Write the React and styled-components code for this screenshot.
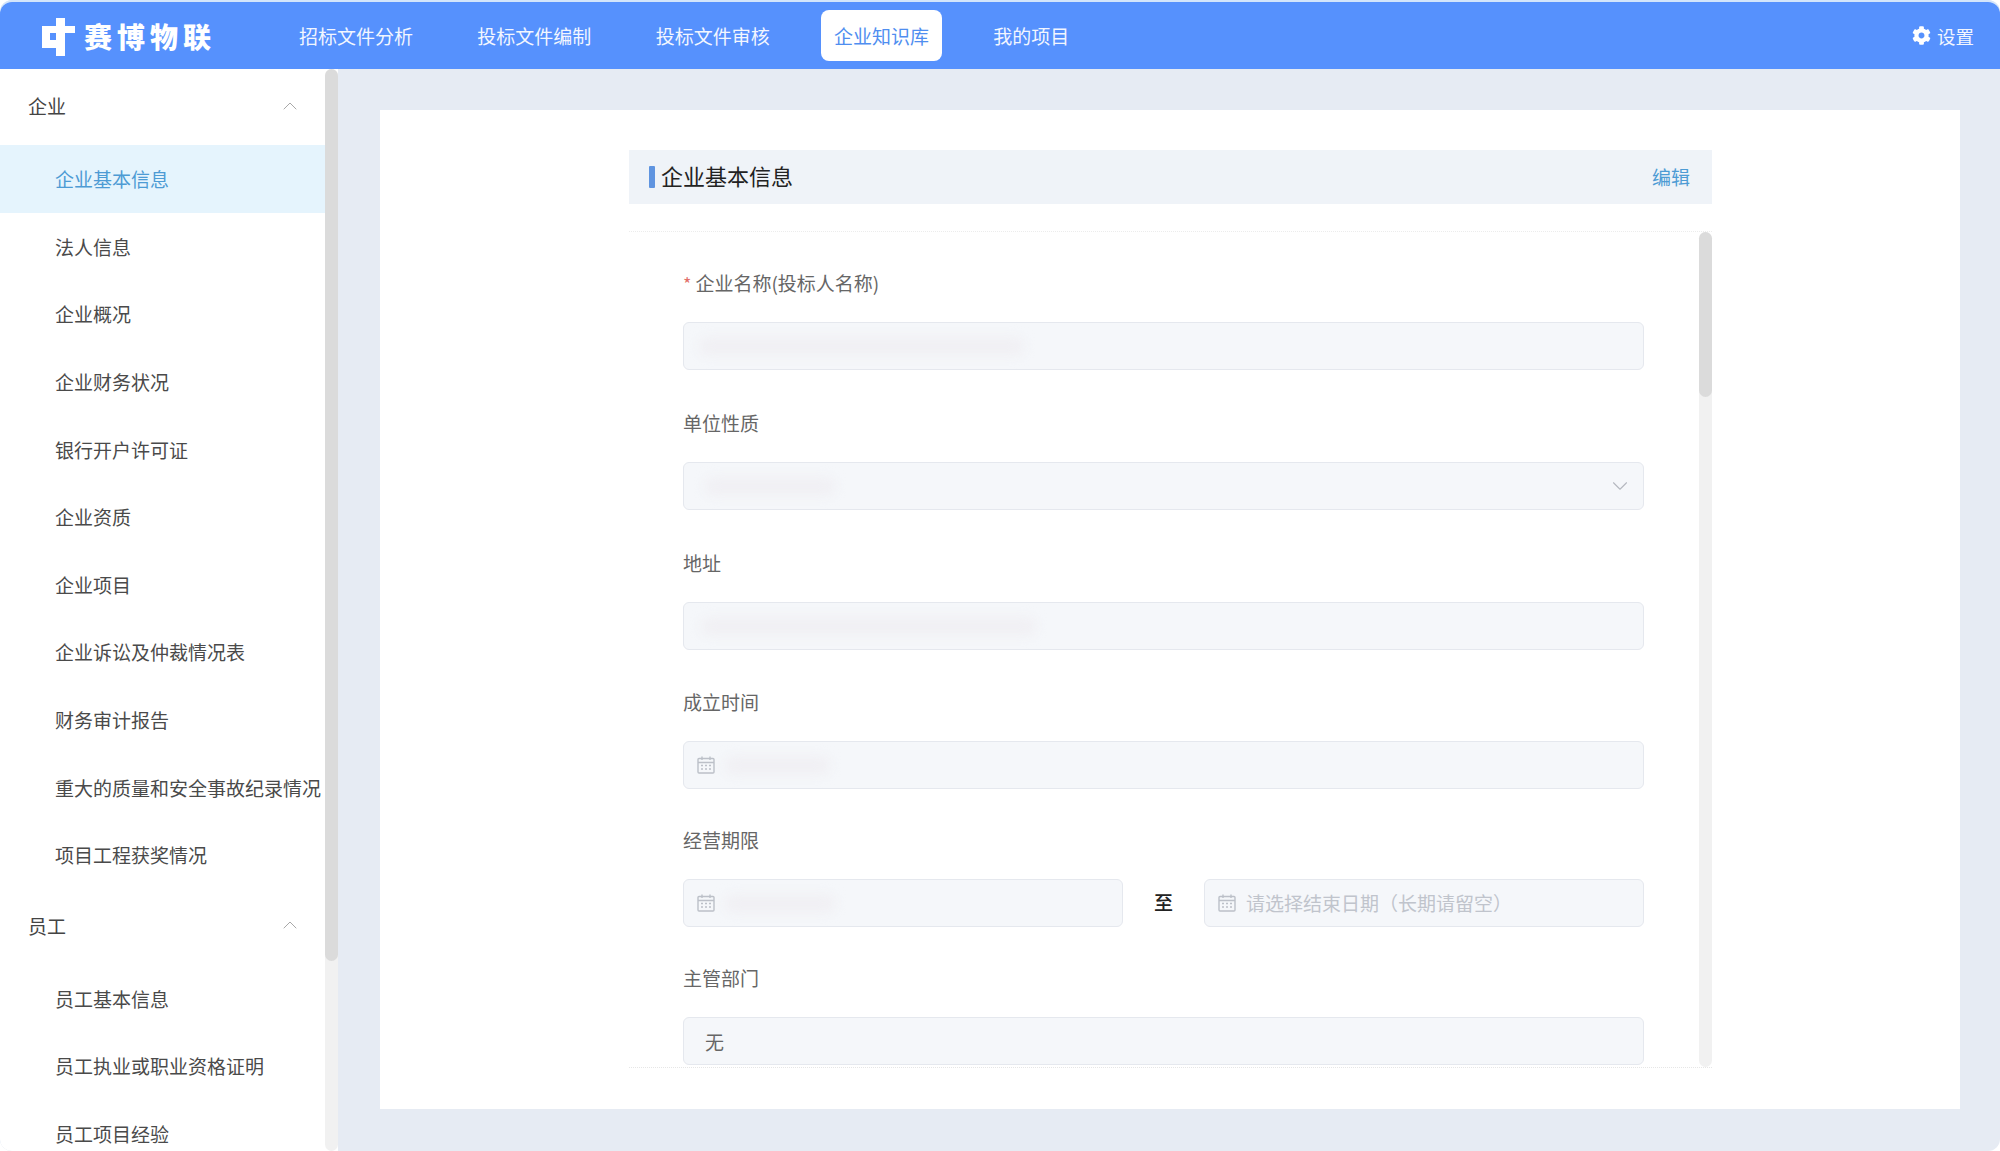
import React from "react";
import styled, { createGlobalStyle } from "styled-components";
import { ChevronUp, ChevronDown } from "lucide-react";
import { FaCog } from "react-icons/fa";

const Global = createGlobalStyle`
  html, body { margin: 0; padding: 0; background: #ffffff; }
  body { font-family: "Noto Sans CJK SC", "Noto Sans", sans-serif; }
  * { box-sizing: border-box; }
`;

const Page = styled.div`
  width: 2000px;
  height: 1151px;
  display: flex;
  flex-direction: column;
  overflow: hidden;
  border-radius: 12px;
  background: #e6ebf3;
  padding-top: 2px;
  box-shadow: inset 0 2px 0 #d3e5fb;
`;

const Header = styled.header`
  height: 67px;
  flex: none;
  display: flex;
  align-items: center;
  background: #5691fd;
  color: #fff;
  padding: 0 26px 0 42px;
  border-radius: 12px 12px 0 0;
`;

const Logo = styled.div`
  width: 244px;
  flex: none;
  display: flex;
  align-items: center;
  gap: 9px;
`;

const LogoName = styled.span`
  font-size: 28px;
  font-weight: 900;
  letter-spacing: 5px;
  line-height: 1;
`;

const Nav = styled.nav`
  display: flex;
  gap: 38.3px;
  flex: 1;
`;

const NavItem = styled.div`
  height: 51px;
  padding: 0 13px;
  display: flex;
  align-items: center;
  font-size: 19px;
  border-radius: 8px;
  color: ${(p) => (p.$active ? "#4f8ef0" : "#f2f6ff")};
  background: ${(p) => (p.$active ? "#fff" : "transparent")};
`;

const Settings = styled.div`
  display: flex;
  align-items: center;
  gap: 6px;
  font-size: 18.5px;
  color: #f2f6ff;
`;

const Body = styled.div`
  flex: 1;
  display: flex;
  min-height: 0;
`;

const Sidebar = styled.aside`
  width: 338px;
  flex: none;
  display: flex;
  background: #fff;
  overflow: hidden;
  border-radius: 0 0 0 12px;
`;

const Menu = styled.div`
  width: 325px;
  flex: none;
`;

const GroupTitle = styled.div`
  height: 76px;
  display: flex;
  align-items: center;
  justify-content: space-between;
  padding: 0 23px 3px 28px;
  font-size: 19px;
  color: #444;
  svg { color: #a8a8a8; }
`;

const MenuItem = styled.div`
  height: 67.6px;
  display: flex;
  align-items: center;
  padding-left: 55px;
  font-size: 19px;
  white-space: nowrap;
  color: ${(p) => (p.$active ? "#4d9bd4" : "#4a4a4a")};
  background: ${(p) => (p.$active ? "#e5f4fd" : "transparent")};
`;

const Track = styled.div`
  width: 13px;
  flex: none;
  background: #f1f1f1;
  border-radius: 7px;
`;

const Thumb = styled.div`
  height: ${(p) => p.$h}px;
  background: #dbdbdb;
  border-radius: 7px;
`;

const Main = styled.main`
  flex: 1;
  min-width: 0;
  padding: 41px 40px 0 42px;
`;

const Card = styled.section`
  height: 999px;
  background: #fff;
  padding: 40px 248px 0 249px;
`;

const SectionHeader = styled.div`
  height: 54px;
  display: flex;
  align-items: center;
  justify-content: space-between;
  padding: 0 22px 0 20px;
  background: #eff3f8;
`;

const Title = styled.h2`
  margin: 0;
  font-size: 22px;
  font-weight: 400;
  line-height: 22px;
  color: #222;
  display: flex;
  align-items: center;
  gap: 6px;
  &::before {
    content: "";
    width: 6px;
    height: 22px;
    border-radius: 1px;
    background: #5f94e0;
  }
`;

const TitleText = styled.span`
  display: block;
  height: 22px;
  line-height: 18px;
`;

const EditLink = styled.span`
  font-size: 19px;
  color: #4d9bd4;
  padding-bottom: 2px;
`;

const Scroller = styled.div`
  margin-top: 27px;
  height: 837px;
  display: flex;
  border-top: 1px dotted #ececec;
  border-bottom: 1px dotted #e6e6e6;
`;

const Form = styled.div`
  flex: 1;
  min-width: 0;
  padding: 34px 55px 0 54px;
  overflow: hidden;
`;

const Field = styled.div`
  height: 104px;
  margin-bottom: ${(p) => p.$after}px;
`;

const Label = styled.label`
  display: block;
  height: 36px;
  line-height: 33px;
  margin-bottom: 20px;
  font-size: 19px;
  color: #666;
`;

const Required = styled.span`
  color: #e2706a;
  margin-right: 4px;
  font-size: 18px;
`;

const Input = styled.div`
  flex: ${(p) => (p.$half ? "1 1 0" : "none")};
  height: 48px;
  display: flex;
  align-items: center;
  gap: 10px;
  padding: 0 10px 0 ${(p) => p.$pad ?? 21}px;
  background: #f5f7fa;
  border: 1px solid #e5e8ee;
  border-radius: 6px;
  font-size: 19px;
  color: #666;
`;

const Redacted = styled.div`
  width: ${(p) => p.$w}px;
  height: 17px;
  margin-left: ${(p) => p.$x ?? 0}px;
  background: #f0eff3;
  border-radius: 8px;
  filter: blur(6px);
`;

const Placeholder = styled.span`
  color: #c0c4cc;
  white-space: nowrap;
  padding-bottom: 2px;
`;

const SelectArrow = styled(ChevronDown)`
  margin-left: auto;
  color: #b4b8bf;
`;

const RangeRow = styled.div`
  display: flex;
  align-items: center;
`;

const RangeSep = styled.div`
  width: 81px;
  flex: none;
  text-align: center;
  font-size: 19px;
  font-weight: 500;
  color: #222;
  padding-bottom: 3px;
`;

const CalendarIcon = () => (
  <svg width="18" height="18" viewBox="0 0 18 18" fill="none" stroke="#bcc0c8" strokeWidth="1.4" style={{ flex: "none" }}>
    <rect x="1" y="2.5" width="16" height="14.5" rx="1" />
    <path d="M1 6.5h16M5 0.5v3.5M13 0.5v3.5" />
    <path d="M4 9.5h2M8 9.5h2M12 9.5h2M4 13h2M8 13h2M12 13h2" />
  </svg>
);

const LogoMark = () => (
  <svg width="33" height="40" viewBox="0 0 33 40" fill="#fff" style={{ flex: "none" }}>
    <path d="M14 2h9v8h10v7H23v23h-9v-8H0V10h14V2zM8 17v7h6v-7z" fillRule="evenodd" />
  </svg>
);

const navItems = ["招标文件分析", "投标文件编制", "投标文件审核", "企业知识库", "我的项目"];
const companyItems = [
  "企业基本信息", "法人信息", "企业概况", "企业财务状况", "银行开户许可证", "企业资质",
  "企业项目", "企业诉讼及仲裁情况表", "财务审计报告", "重大的质量和安全事故纪录情况", "项目工程获奖情况",
];
const staffItems = ["员工基本信息", "员工执业或职业资格证明", "员工项目经验"];

export default function App() {
  return (
    <>
      <Global />
      <Page>
        <Header>
          <Logo>
            <LogoMark />
            <LogoName>赛博物联</LogoName>
          </Logo>
          <Nav>
            {navItems.map((n) => (
              <NavItem key={n} $active={n === "企业知识库"}>{n}</NavItem>
            ))}
          </Nav>
          <Settings><FaCog size={19} color="#fff" />设置</Settings>
        </Header>
        <Body>
          <Sidebar>
            <Menu>
              <GroupTitle>企业<ChevronUp size={24} strokeWidth={1} /></GroupTitle>
              {companyItems.map((m) => (
                <MenuItem key={m} $active={m === "企业基本信息"}>{m}</MenuItem>
              ))}
              <GroupTitle>员工<ChevronUp size={24} strokeWidth={1} /></GroupTitle>
              {staffItems.map((m) => <MenuItem key={m}>{m}</MenuItem>)}
            </Menu>
            <Track><Thumb $h={892} /></Track>
          </Sidebar>
          <Main>
            <Card>
              <SectionHeader>
                <Title><TitleText>企业基本信息</TitleText></Title>
                <EditLink>编辑</EditLink>
              </SectionHeader>
              <Scroller>
                <Form>
                  <Field $after={36}>
                    <Label><Required>*</Required>企业名称(投标人名称)</Label>
                    <Input><Redacted $w={325} $x={-6} /></Input>
                  </Field>
                  <Field $after={36}>
                    <Label>单位性质</Label>
                    <Input><Redacted $w={130} /><SelectArrow size={26} strokeWidth={1} /></Input>
                  </Field>
                  <Field $after={35}>
                    <Label>地址</Label>
                    <Input><Redacted $w={335} $x={-4} /></Input>
                  </Field>
                  <Field $after={34}>
                    <Label>成立时间</Label>
                    <Input $pad={13}><CalendarIcon /><Redacted $w={105} /></Input>
                  </Field>
                  <Field $after={34}>
                    <Label>经营期限</Label>
                    <RangeRow>
                      <Input $half $pad={13}><CalendarIcon /><Redacted $w={110} /></Input>
                      <RangeSep>至</RangeSep>
                      <Input $half $pad={13}><CalendarIcon /><Placeholder>请选择结束日期（长期请留空）</Placeholder></Input>
                    </RangeRow>
                  </Field>
                  <Field $after={0}>
                    <Label>主管部门</Label>
                    <Input>无</Input>
                  </Field>
                </Form>
                <Track><Thumb $h={165} /></Track>
              </Scroller>
            </Card>
          </Main>
        </Body>
      </Page>
    </>
  );
}
